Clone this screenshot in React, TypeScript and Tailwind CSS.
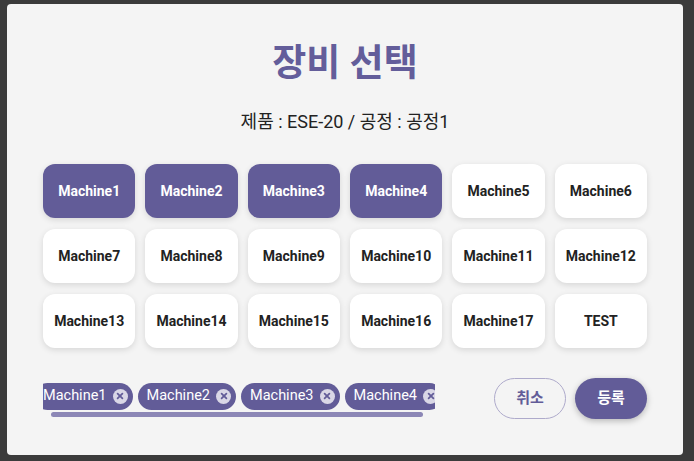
import { useState } from 'react'

const MACHINES = [
  'Machine1', 'Machine2', 'Machine3', 'Machine4', 'Machine5', 'Machine6',
  'Machine7', 'Machine8', 'Machine9', 'Machine10', 'Machine11', 'Machine12',
  'Machine13', 'Machine14', 'Machine15', 'Machine16', 'Machine17', 'TEST',
]

const FONT = "font-['Roboto','Noto_Sans_CJK_KR',sans-serif]"

function CloseDot() {
  return (
    <span className="flex h-[15px] w-[15px] shrink-0 items-center justify-center rounded-full bg-[#d9d7e6]">
      <svg viewBox="0 0 10 10" className="h-[8px] w-[8px]" fill="none" stroke="#625c98" strokeWidth="2.2" strokeLinecap="round">
        <path d="M2 2l6 6M8 2l-6 6" />
      </svg>
    </span>
  )
}

export default function App() {
  const [selected, setSelected] = useState<string[]>(['Machine1', 'Machine2', 'Machine3', 'Machine4'])

  const toggle = (name: string) =>
    setSelected((prev) => (prev.includes(name) ? prev.filter((m) => m !== name) : [...prev, name]))

  return (
    <div className={`h-[461px] w-[694px] bg-[#3b3b3b] pl-[7px] pt-[4px] ${FONT}`}>
      <div className="flex h-[451px] w-[676px] flex-col rounded-[4px] bg-[#f4f4f4] px-[36px]">
        <h1 className="mt-[35px] text-center text-[37px] font-bold leading-[50px] text-[#635d9a]">장비 선택</h1>
        <p className="mt-[22px] text-center text-[18px] leading-[22px] text-[#222]">제품 : ESE-20 / 공정 : 공정1</p>

        <div className="mt-[31px] grid grid-cols-6 gap-x-[10px] gap-y-[11px]">
          {MACHINES.map((name) => {
            const on = selected.includes(name)
            return (
              <button
                key={name}
                type="button"
                onClick={() => toggle(name)}
                className={`h-[54px] rounded-[12px] text-[14px] font-bold shadow-[0_2px_6px_rgba(0,0,0,0.12)] ${
                  on ? 'bg-[#625c98] text-white' : 'bg-white text-[#222]'
                }`}
              >
                {name}
              </button>
            )
          })}
        </div>

        <div className="mt-[30px] flex items-center justify-between">
          <div className="w-[392px] pt-[2px]">
            <div className="overflow-hidden">
              <div className="-ml-[9px] flex gap-[5px]">
                {selected.map((name) => (
                  <span
                    key={name}
                    className="flex h-[27px] shrink-0 items-center gap-[6px] rounded-full bg-[#625c98] pl-[9px] pr-[5px] text-[14.5px] text-white"
                  >
                    {name}
                    <CloseDot />
                  </span>
                ))}
              </div>
            </div>
            <div className="mt-[2px] h-[5px]">
              <div className="ml-[8px] h-[5px] w-[372px] rounded-full bg-[#8c87b6]" />
            </div>
          </div>

          <div className="flex gap-[9px]">
            <button
              type="button"
              className="h-[41px] w-[72px] rounded-full border border-[#aeaacb] text-[15px] font-bold text-[#625c98]"
            >
              취소
            </button>
            <button
              type="button"
              className="h-[41px] w-[72px] rounded-full bg-[#625c98] text-[15px] font-bold text-white shadow-[0_2px_6px_rgba(0,0,0,0.25)]"
            >
              등록
            </button>
          </div>
        </div>
      </div>
    </div>
  )
}
